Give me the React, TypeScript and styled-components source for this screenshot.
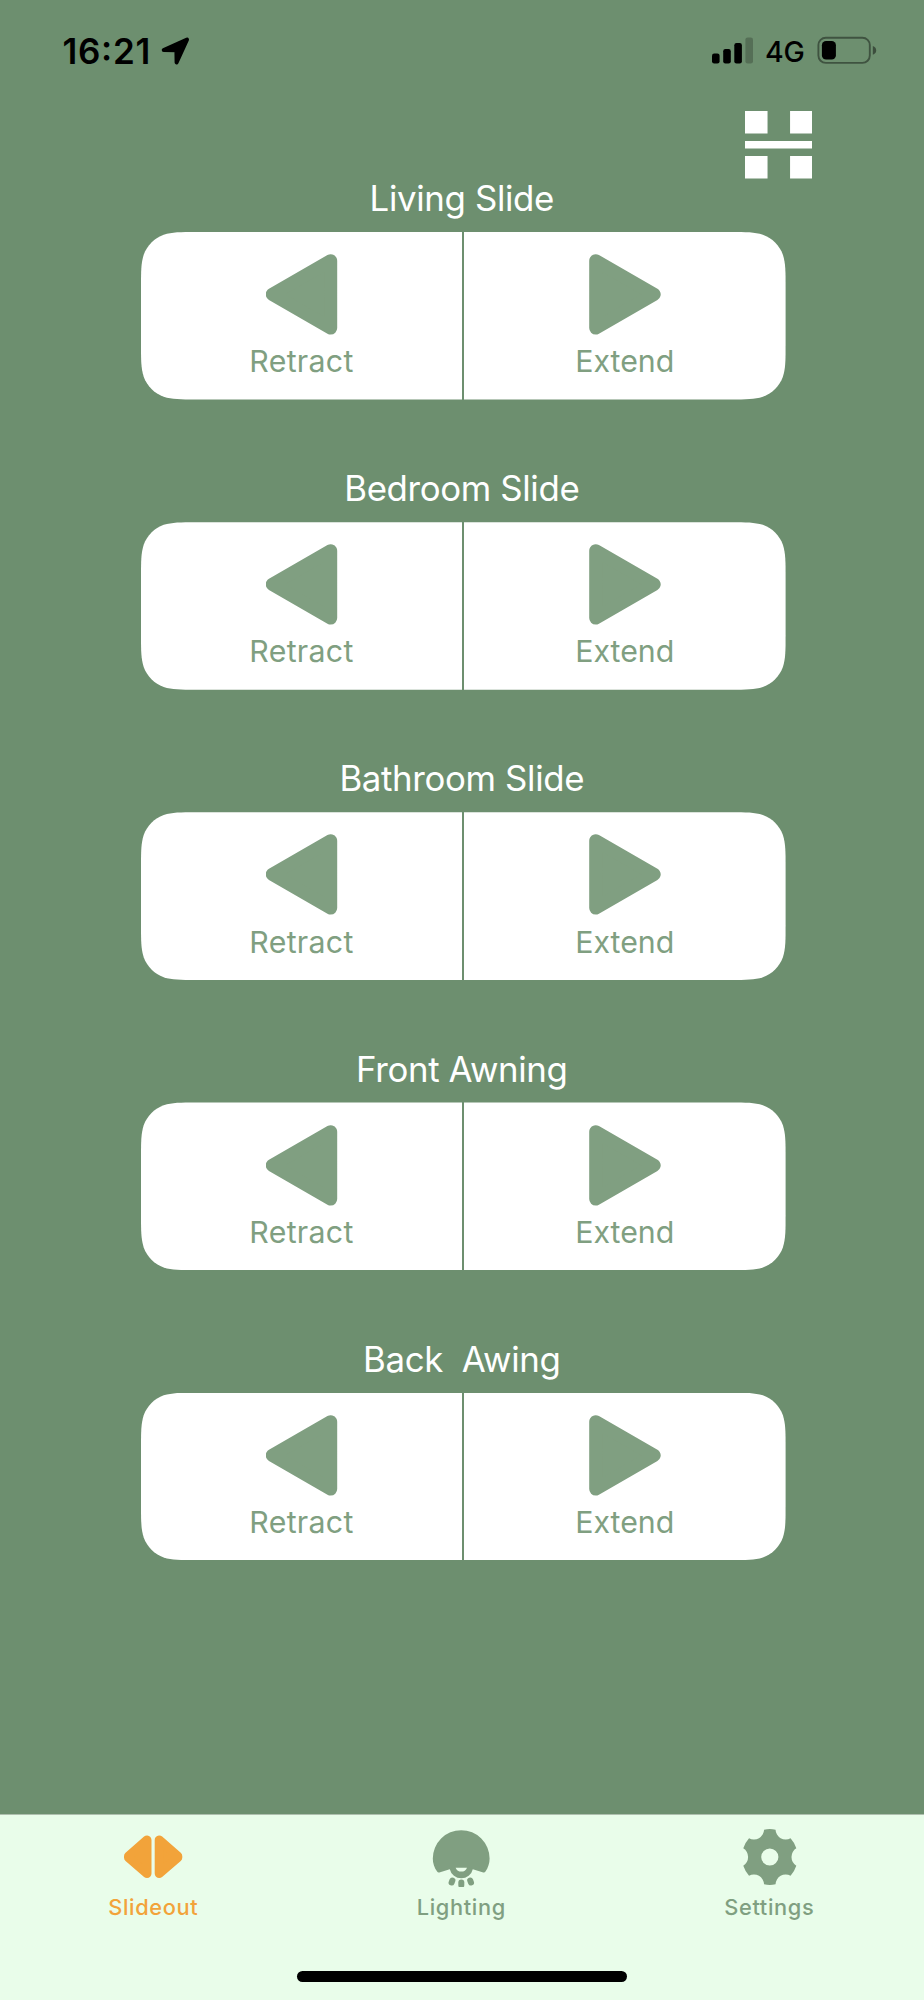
import React from "react";
import styled, { createGlobalStyle } from "styled-components";

const colors = {
  page: "#6d8f6f",
  sage: "#809f81",
  mint: "#e9fdea",
  orange: "#f2a33a",
};

const GlobalStyle = createGlobalStyle`
  body { margin: 0; background: ${colors.page}; }
  * { box-sizing: border-box; }
  button { font: inherit; border: 0; padding: 0; background: none; }
  svg { display: block; flex: none; }
`;

const Screen = styled.div`
  width: 924px;
  height: 2000px;
  display: flex;
  flex-direction: column;
  background: ${colors.page};
  font-family: Inter, "Liberation Sans", sans-serif;
  overflow: hidden;
`;

const StatusBar = styled.header`
  height: 111.4px;
  flex: none;
  display: flex;
  justify-content: space-between;
  padding: 31px 47px 0 62.5px;
  color: #000;
`;

const StatusGroup = styled.div`
  display: flex;
  align-items: flex-start;
`;

const Clock = styled.span`
  font-size: 35px;
  font-weight: 600;
  line-height: 40px;
  letter-spacing: 0.7px;
  font-feature-settings: "case";
  width: 98.5px;
`;

const Network = styled.span`
  font-size: 28.5px;
  font-weight: 500;
  line-height: 42px;
  width: 63.5px;
  padding-left: 11.5px;
  letter-spacing: -0.2px;
`;

const Toolbar = styled.div`
  flex: none;
  height: 67.6px;
  display: flex;
  justify-content: flex-end;
  padding-right: 111.6px;
`;

const ScanButton = styled.button`
  width: 67.6px;
  height: 67.6px;
`;

const ControlList = styled.main`
  flex: 1;
  display: flex;
  flex-direction: column;
  gap: 69.6px;
  padding-left: 141px;
`;

const Control = styled.section`
  width: 644.6px;
  display: flex;
  flex-direction: column;
`;

const ControlTitle = styled.h2`
  margin: 0 3px 14.9px 0;
  height: 38.1px;
  text-align: center;
  white-space: pre;
  font-size: 34.8px;
  font-weight: 400;
  line-height: 38px;
  letter-spacing: -0.35px;
  color: #fff;
`;

const ButtonPair = styled.div`
  height: 167.6px;
  display: grid;
  grid-template-columns: 321px 321.6px;
  gap: 2px;
  clip-path: path(
    "M0 55C0 39.2 0 31.3 2.7 22.7C6.1 13.4 13.4 6.1 22.7 2.7C31.3 0 39.2 0 55 0H589.6C605.4 0 613.3 0 621.9 2.7C631.2 6.1 638.5 13.4 641.9 22.7C644.6 31.3 644.6 39.2 644.6 55V112.6C644.6 128.4 644.6 136.3 641.9 144.9C638.5 154.2 631.2 161.5 621.9 164.9C613.3 167.6 605.4 167.6 589.6 167.6H55C39.2 167.6 31.3 167.6 22.7 164.9C13.4 161.5 6.1 154.2 2.7 144.9C0 136.3 0 128.4 0 112.6Z"
  );
`;

const MoveButton = styled.button`
  display: flex;
  flex-direction: column;
  align-items: center;
  gap: 8.2px;
  padding-top: 22.1px;
  background: #fff;
  color: ${colors.sage};
`;

const MoveLabel = styled.span<{ $tracking: number }>`
  font-size: 30.3px;
  line-height: 36px;
  letter-spacing: ${(p) => p.$tracking}px;
`;

const TabBar = styled.nav`
  flex: none;
  height: 186px;
  display: flex;
  flex-direction: column;
  justify-content: space-between;
  align-items: center;
  background: ${colors.mint};
  border-top: 1px solid #aebfae;
  padding-bottom: 18px;
`;

const Tabs = styled.div`
  width: 100%;
  display: grid;
  grid-template-columns: repeat(3, 1fr);
`;

const Tab = styled.button<{ $active?: boolean }>`
  display: flex;
  flex-direction: column;
  align-items: center;
  padding: 11.5px 1.4px 0 0;
  gap: 7px;
  color: ${(p) => (p.$active ? colors.orange : colors.sage)};
`;

const TabLabel = styled.span`
  font-size: 21.8px;
  font-weight: 500;
  line-height: 26px;
  letter-spacing: 0.65px;
`;

const HomeIndicator = styled.div`
  width: 330px;
  height: 11px;
  border-radius: 5.5px;
  background: #000;
`;

const LocationIcon = () => (
  <svg width="30" height="40" viewBox="0 0 30 40" fill="currentColor" stroke="currentColor" strokeWidth="4" strokeLinejoin="round">
    <path d="M2.7 19 26 8.6 15.6 31.4 15.4 19.2Z" />
  </svg>
);

const SignalIcon = () => (
  <svg width="42" height="40" viewBox="0 0 42 40" fill="currentColor">
    <rect x="0" y="22.6" width="7.6" height="9.9" rx="2.2" />
    <rect x="11.2" y="18.1" width="7.6" height="14.4" rx="2.2" />
    <rect x="22.3" y="12" width="7.6" height="20.5" rx="2.2" />
    <rect x="33.4" y="6.4" width="7.6" height="26.1" rx="2.2" opacity="0.22" />
  </svg>
);

const BatteryIcon = () => (
  <svg width="60" height="40" viewBox="0 0 60 40" fill="currentColor">
    <rect x="1.4" y="6.7" width="51.4" height="25.2" rx="7.4" fill="none" stroke="currentColor" strokeWidth="1.9" opacity="0.42" />
    <rect x="4.9" y="10" width="14" height="18.6" rx="4.2" />
    <path d="M55.8 15.1Q59.2 16.4 59.2 19.4T55.8 23.7Z" opacity="0.45" />
  </svg>
);

const ScanIcon = () => (
  <svg width="67.6" height="67.6" viewBox="0 0 9 9" fill="#fff">
    <path d="M0 0h3v3H0zM6 0h3v3H6zM0 4h9v1H0zM0 6h3v3H0zM6 6h3v3H6z" />
  </svg>
);

const ArrowIcon = ({ direction }: { direction: "left" | "right" }) => (
  <svg width="72" height="81" viewBox="0 0 72 81" fill="currentColor" stroke="currentColor" strokeWidth="13" strokeLinejoin="round">
    <path d={direction === "left" ? "M64.7 6.7V74.1L6.2 40.4Z" : "M6.7 6.7V74.1L65.2 40.4Z"} />
  </svg>
);

const SlideoutIcon = () => (
  <svg width="60" height="60" viewBox="0 0 60 60" fill="currentColor" stroke="currentColor" strokeWidth="9" strokeLinejoin="round">
    <path d="M24 13V46.6L5.5 30.6V29.2Z" />
    <path d="M36.2 13V46.6L54.8 30.6V29.2Z" />
  </svg>
);

const LightingIcon = () => (
  <svg width="60" height="60" viewBox="0 0 60 60" fill="currentColor">
    <path d="M6.3 44.8C3.2 41 1.8 36 1.8 31.6A28.4 28.4 0 0 1 58.6 31.6C58.6 36 57.2 41 54.3 44.8Q53.6 45.8 52.3 45.4L41.8 42.2A11.8 11.8 0 0 1 18.8 42.2L8.3 45.4Q7 45.8 6.3 44.8Z" />
    <path d="M24.6 40.7H36Q34.4 44.6 30.3 44.6T24.6 40.7Z" fill={colors.mint} />
    <rect x="18" y="50.4" width="6" height="8.2" rx="3" transform="rotate(22 21 54.5)" />
    <rect x="27.3" y="52.4" width="6" height="8.6" rx="3" />
    <rect x="36.6" y="50.4" width="6" height="8.2" rx="3" transform="rotate(-22 39.6 54.5)" />
  </svg>
);

const gearPath = (() => {
  const point = (deg: number) => {
    const a = (deg * Math.PI) / 180;
    return `${(30.8 + 27.9 * Math.sin(a)).toFixed(2)} ${(30 - 27.9 * Math.cos(a)).toFixed(2)}`;
  };
  let d = `M${point(-11.9)}`;
  for (let i = 0; i < 6; i++) {
    d += `A27.9 27.9 0 0 1 ${point(i * 60 + 11.9)}A10.2 10.2 0 0 0 ${point(i * 60 + 48.1)}`;
  }
  return `${d}ZM30.8 21.4a8.6 8.6 0 1 0 0 17.2a8.6 8.6 0 1 0 0-17.2Z`;
})();

const SettingsIcon = () => (
  <svg width="60" height="60" viewBox="0 0 60 60" fill="currentColor" fillRule="evenodd">
    <path d={gearPath} />
  </svg>
);

const controls = ["Living Slide", "Bedroom Slide", "Bathroom Slide", "Front Awning", "Back  Awing"];

export default function App() {
  return (
    <Screen>
      <GlobalStyle />
      <StatusBar>
        <StatusGroup>
          <Clock>16:21</Clock>
          <LocationIcon />
        </StatusGroup>
        <StatusGroup>
          <SignalIcon />
          <Network>4G</Network>
          <BatteryIcon />
        </StatusGroup>
      </StatusBar>
      <Toolbar>
        <ScanButton aria-label="Scan">
          <ScanIcon />
        </ScanButton>
      </Toolbar>
      <ControlList>
        {controls.map((name) => (
          <Control key={name}>
            <ControlTitle>{name}</ControlTitle>
            <ButtonPair>
              <MoveButton>
                <ArrowIcon direction="left" />
                <MoveLabel $tracking={0.3}>Retract</MoveLabel>
              </MoveButton>
              <MoveButton>
                <ArrowIcon direction="right" />
                <MoveLabel $tracking={0}>Extend</MoveLabel>
              </MoveButton>
            </ButtonPair>
          </Control>
        ))}
      </ControlList>
      <TabBar>
        <Tabs>
          <Tab $active>
            <SlideoutIcon />
            <TabLabel>Slideout</TabLabel>
          </Tab>
          <Tab>
            <LightingIcon />
            <TabLabel>Lighting</TabLabel>
          </Tab>
          <Tab>
            <SettingsIcon />
            <TabLabel>Settings</TabLabel>
          </Tab>
        </Tabs>
        <HomeIndicator />
      </TabBar>
    </Screen>
  );
}
